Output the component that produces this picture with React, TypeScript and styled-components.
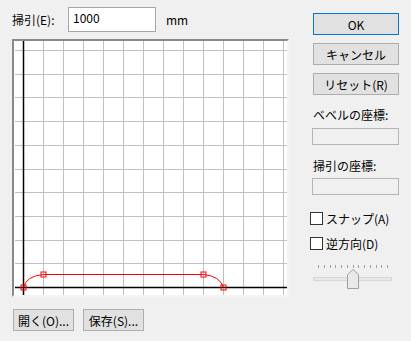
import React from 'react';
import styled, { createGlobalStyle } from 'styled-components';

const GlobalStyle = createGlobalStyle`
  html, body {
    margin: 0;
    padding: 0;
    background: #f0f0f0;
  }
  body {
    font-family: "Noto Sans CJK JP", "Liberation Sans", sans-serif;
    font-size: 12px;
    color: #000;
  }
`;

const Dialog = styled.div`
  width: 411px;
  height: 341px;
  box-sizing: border-box;
  padding: 7px 0 0 12px;
  display: flex;
  background: #f0f0f0;
`;

const LeftColumn = styled.div`
  width: 277px;
  display: flex;
  flex-direction: column;
`;

const RightColumn = styled.div`
  width: 86px;
  margin-left: 24px;
  padding-top: 6px;
  display: flex;
  flex-direction: column;
`;

const TopRow = styled.div`
  height: 25px;
  display: flex;
  align-items: center;
`;

const Label = styled.span`
  width: 56px;
  white-space: nowrap;
`;

const TextInput = styled.div`
  width: 88px;
  height: 25px;
  box-sizing: border-box;
  border: 1px solid #a6a6a6;
  background: #fff;
  padding: 0 4px 3px;
  display: flex;
  align-items: center;
  line-height: 1;
`;

const Unit = styled.span`
  margin-left: 10px;
`;

const Canvas = styled.div`
  margin-top: 7px;
  width: 277px;
  height: 258px;
  box-sizing: border-box;
  border-style: solid;
  border-width: 2px;
  border-color: #8a8a8a #f4f4f4 #f4f4f4 #8a8a8a;
  background: #fff;
  display: flex;
`;

const ButtonRow = styled.div`
  margin-top: 12px;
  padding-left: 1px;
  display: flex;
  gap: 9px;
`;

const Button = styled.div<{ $width: number; $default?: boolean }>`
  width: ${({ $width }) => $width}px;
  height: 22px;
  box-sizing: border-box;
  border: 1px solid ${({ $default }) => ($default ? '#0078d7' : '#adadad')};
  background: #e1e1e1;
  display: flex;
  align-items: center;
  justify-content: center;
  white-space: nowrap;
`;

const ButtonStack = styled.div`
  display: flex;
  flex-direction: column;
  gap: 8px;
`;

const FieldLabel = styled.div<{ $top: number }>`
  height: 16px;
  line-height: 16px;
  margin-top: ${({ $top }) => $top}px;
`;

const ReadonlyField = styled.div<{ $top: number }>`
  margin-top: ${({ $top }) => $top}px;
  width: 87px;
  margin-left: -1px;
  height: 17px;
  box-sizing: border-box;
  border: 1px solid #b4b4b4;
  background: #f0f0f0;
`;

const CheckRow = styled.div<{ $top: number }>`
  margin-top: ${({ $top }) => $top}px;
  margin-left: -3px;
  height: 16px;
  display: flex;
  align-items: center;
  gap: 3px;
  white-space: nowrap;
`;

const CheckBox = styled.span`
  width: 13px;
  height: 13px;
  box-sizing: border-box;
  border: 1px solid #333;
  background: #fff;
`;

const Slider = styled.div`
  position: relative;
  margin-top: 14px;
  width: 79px;
  height: 26px;
`;

const Ticks = styled.div`
  margin-left: 5px;
  width: 70px;
  height: 3px;
  display: flex;
  justify-content: space-between;
`;

const Tick = styled.span`
  width: 1px;
  height: 3px;
  background: #a0a0a0;
`;

const Track = styled.div`
  margin-top: 9px;
  height: 4px;
  box-sizing: border-box;
  border: 1px solid #d6d6d6;
  background: #e7e7e7;
`;

const Thumb = styled.svg`
  position: absolute;
  left: 34px;
  top: 4px;
`;

const vLines = Array.from({ length: 13 }, (_, i) => 29 + i * 20);
const hLines = Array.from({ length: 10 }, (_, i) => Math.round(9 + i * 23.7));

const markers: [number, number][] = [
  [9, 246],
  [29, 233],
  [189, 233],
  [209, 246],
];

function Plot() {
  return (
    <svg width="273" height="254" viewBox="0 0 273 254">
      {vLines.map((x) => (
        <line key={`v${x}`} x1={x + 0.5} y1={0} x2={x + 0.5} y2={254} stroke="#c0c0c0" />
      ))}
      {hLines.map((y) => (
        <line key={`h${y}`} x1={1} y1={y + 0.5} x2={273} y2={y + 0.5} stroke="#c0c0c0" />
      ))}
      <line x1={9.5} y1={0} x2={9.5} y2={254} stroke="#000" strokeWidth={1.5} />
      <line x1={1} y1={246.5} x2={273} y2={246.5} stroke="#000" strokeWidth={1.5} />
      <path
        d="M9.5 246.5 Q12 235 29.5 233.5 L189.5 233.5 Q206 235 209.5 246.5"
        fill="none"
        stroke="#ff0000"
      />
      {markers.map(([x, y]) => (
        <rect key={`${x}-${y}`} x={x - 2} y={y - 2} width={5} height={5} fill="none" stroke="#ff0000" />
      ))}
    </svg>
  );
}

export default function App() {
  return (
    <>
      <GlobalStyle />
      <Dialog>
        <LeftColumn>
          <TopRow>
            <Label>掃引(E):</Label>
            <TextInput>1000</TextInput>
            <Unit>mm</Unit>
          </TopRow>
          <Canvas>
            <Plot />
          </Canvas>
          <ButtonRow>
            <Button $width={61}>開く(O)...</Button>
            <Button $width={61}>保存(S)...</Button>
          </ButtonRow>
        </LeftColumn>
        <RightColumn>
          <ButtonStack>
            <Button $width={86} $default>OK</Button>
            <Button $width={86}>キャンセル</Button>
            <Button $width={86}>リセット(R)</Button>
          </ButtonStack>
          <FieldLabel $top={12}>ベベルの座標:</FieldLabel>
          <ReadonlyField $top={5} />
          <FieldLabel $top={13}>掃引の座標:</FieldLabel>
          <ReadonlyField $top={4} />
          <CheckRow $top={15}>
            <CheckBox />
            スナップ(A)
          </CheckRow>
          <CheckRow $top={9}>
            <CheckBox />
            逆方向(D)
          </CheckRow>
          <Slider>
            <Ticks>
              {Array.from({ length: 13 }, (_, i) => (
                <Tick key={i} />
              ))}
            </Ticks>
            <Track />
            <Thumb width="12" height="20" viewBox="0 0 12 20">
              <path d="M0.5 19.5 V5.5 L6 0.5 L11.5 5.5 V19.5 Z" fill="#e9e9e9" stroke="#a0a0a0" />
            </Thumb>
          </Slider>
        </RightColumn>
      </Dialog>
    </>
  );
}
